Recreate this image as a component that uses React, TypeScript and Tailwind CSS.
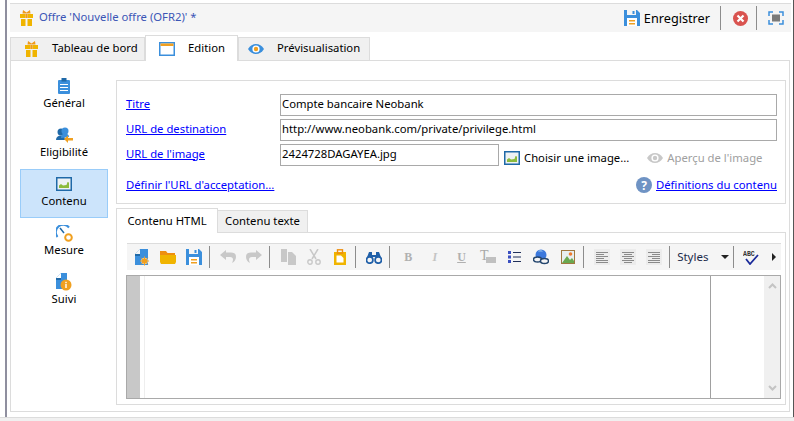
import type { ReactNode } from "react";

const Gift = () => (
  <svg width="13" height="16" viewBox="0 0 13 16">
    <path d="M3 0l3.500 2.500L10 0l.5 3.500h-8z" fill="#ee9a1c" />
    <rect x="0" y="4" width="5.500" height="4" fill="#f0b400" />
    <rect x="7.500" y="4" width="5.500" height="4" fill="#f0b400" />
    <rect x="5.500" y="4" width="2" height="4" fill="#ee9a1c" />
    <rect x="1" y="9" width="4.500" height="7" fill="#f0b400" />
    <rect x="7.500" y="9" width="4.500" height="7" fill="#f0b400" />
  </svg>
);

const Floppy = ({ size = 16 }: { size?: number }) => (
  <svg width={size} height={size} viewBox="0 0 16 16">
    <path d="M0 0h3v5h9V0h1l3 3v13H0z" fill="#3b8fdc" />
    <rect x="8.500" y="1" width="2" height="3" fill="#3b8fdc" />
    <rect x="3" y="8" width="10" height="8" fill="#fff" />
    <rect x="5" y="10" width="6" height="1.500" fill="#f0a020" />
    <rect x="5" y="13" width="6" height="1.500" fill="#f0a020" />
  </svg>
);

const ImageIcon = () => (
  <svg width="16" height="14" viewBox="0 0 16 14">
    <rect x="0.750" y="0.750" width="14.500" height="12.500" fill="#eef2f4" stroke="#1f69a8" strokeWidth="1.500" />
    <path d="M3 11V8.500l2-1.500 2 1.500L10.500 8l1-3 1.500.5V11z" fill="#8cbb3c" />
  </svg>
);

const Eye = ({ color, pupil }: { color: string; pupil: string }) => (
  <svg width="16" height="12" viewBox="0 0 16 12">
    <path d="M0 6c2-3.500 5-5 8-5s6 1.500 8 5c-2 3.500-5 5-8 5S2 9.500 0 6z" fill={color} />
    <circle cx="8" cy="6" r="3.600" fill="#fff" />
    <circle cx="8" cy="6" r="2.200" fill={pupil} />
  </svg>
);

const NavClipboard = () => (
  <svg width="12" height="16" viewBox="0 0 12 16">
    <rect y="2" width="12" height="14" rx="1" fill="#3b8fdc" />
    <rect x="3.500" y="0" width="5" height="3.500" fill="#1f69a8" />
    <rect x="2" y="6" width="8" height="1" fill="#fff" />
    <rect x="2" y="9" width="8" height="1" fill="#fff" />
    <rect x="2" y="12" width="8" height="1" fill="#fff" />
  </svg>
);

const NavUsers = () => (
  <svg width="17" height="16" viewBox="0 0 17 16">
    <circle cx="5" cy="5" r="3.500" fill="#1f69a8" />
    <path d="M0 13c0-3 2-4.500 5-4.500S9 10 9 13z" fill="#1f69a8" />
    <circle cx="9" cy="4" r="3.500" fill="#3b8fdc" />
    <path d="M5 11c0-3 1.500-4.500 4-4.500s4 1.500 4 3.500z" fill="#3b8fdc" />
    <path d="M8 12l4-3.500V11h5v2.500h-5V16z" fill="#f0a020" />
  </svg>
);

const NavGauge = () => (
  <svg width="17" height="17" viewBox="0 0 17 17">
    <path d="M1.500 12A7 7 0 0 1 13 2.500" fill="none" stroke="#3b8fdc" strokeWidth="2" />
    <path d="M4 3l4 5" stroke="#1f69a8" strokeWidth="1.500" />
    <circle cx="12.500" cy="12.500" r="3.300" fill="#fff" stroke="#f0a020" strokeWidth="2" />
  </svg>
);

const NavFollow = () => (
  <svg width="16" height="18" viewBox="0 0 16 18">
    <path d="M0 5l5-5h6v16H0z" fill="#3b8fdc" />
    <path d="M0 5h5V0z" fill="#fff" />
    <rect x="0" y="5" width="5" height="2" fill="#1f69a8" />
    <circle cx="10" cy="12" r="5.500" fill="#f0a020" />
    <rect x="9.300" y="11" width="1.400" height="4" fill="#fff" />
    <rect x="9.300" y="8.800" width="1.400" height="1.400" fill="#fff" />
  </svg>
);

const Sep = () => <div className="w-px h-[22px] bg-[#8c8c8c] ml-[2px] mr-[5px] shrink-0" />;

const Btn = ({ children, wide }: { children: ReactNode; wide?: boolean }) => (
  <div className={`${wide ? "w-[26.6px]" : "w-[26px]"} h-[22px] flex items-center justify-center shrink-0`}>
    {children}
  </div>
);

const AlignIcon = ({ lines }: { lines: [number, number][] }) => (
  <div className="w-4 h-4 bg-[#ececec] flex items-center justify-center">
    <svg width="12" height="11" viewBox="0 0 12 11">
      {lines.map(([x, w], i) => (
        <rect key={i} x={x} y={i * 2} width={w} height="1" fill="#8a8a8a" />
      ))}
    </svg>
  </div>
);

const navItems = [
  { label: "Général", icon: <NavClipboard /> },
  { label: "Eligibilité", icon: <NavUsers /> },
  { label: "Contenu", icon: <ImageIcon />, active: true },
  { label: "Mesure", icon: <NavGauge /> },
  { label: "Suivi", icon: <NavFollow /> },
];

const fields = [
  { label: "Titre", value: "Compte bancaire Neobank" },
  { label: "URL de destination", value: "http://www.neobank.com/private/privilege.html" },
];

export default function App() {
  return (
    <div
      className="w-[794px] h-[421px] bg-white overflow-hidden flex flex-col text-[11.3px] text-black"
      style={{ fontFamily: '"Noto Sans", sans-serif' }}
    >
      <div className="h-[417px] flex pl-[5px] pr-px border-r border-[#555]">
        <div className="flex-1 border-l-2 border-[#8f8f9f] pl-[3px] pt-[3px] flex flex-col">
          {/* title bar */}
          <div className="h-[29px] mr-[1px] border-t border-[#dcdcdc] bg-[#f5f5f5] flex items-center pl-[10px] pr-[7px] shrink-0">
            <Gift />
            <span className="ml-[6px] pb-[2px] text-[#3b55b5]">Offre 'Nouvelle offre (OFR2)' *</span>
            <div className="ml-auto flex items-center">
              <Floppy />
              <span className="ml-[4px] text-[12.7px] leading-none">Enregistrer</span>
              <div className="w-px h-6 bg-[#8c8c8c] ml-[10px] mr-[12px]" />
              <svg width="15" height="15" viewBox="0 0 15 15">
                <circle cx="7.500" cy="7.500" r="7.500" fill="#d9534f" />
                <path d="M4.500 4.500l6 6m0-6l-6 6" stroke="#fff" strokeWidth="2.200" />
              </svg>
              <div className="w-px h-6 bg-[#8c8c8c] ml-[8px] mr-[11px]" />
              <svg width="16" height="14" viewBox="0 0 16 14">
                <path d="M1 5V1h4M11 1h4v4M15 9v4h-4M5 13H1V9" fill="none" stroke="#3b8fdc" strokeWidth="1.500" />
                <rect x="4" y="3.500" width="8" height="7" fill="#7a7a7a" />
              </svg>
            </div>
          </div>

          {/* main tabs */}
          <div className="h-[26px] flex items-end shrink-0 relative z-10 -mb-px mt-[3px]">
            <div className="h-[24px] w-[135px] bg-[#f0f0f0] border border-[#dcdcdc] flex items-center pl-[14px]">
              <Gift />
              <span className="ml-[14px] pb-[2px]">Tableau de bord</span>
            </div>
            <div className="h-[26px] w-[93px] bg-white border border-[#dcdcdc] border-b-0 flex items-center pl-[13px]">
              <svg width="16" height="14" viewBox="0 0 16 14">
                <rect x="0.750" y="0.750" width="14.500" height="12.500" fill="#fff" stroke="#3b8fdc" strokeWidth="1.500" />
                <rect x="1.500" y="1.500" width="13" height="2.500" fill="#f0a020" />
              </svg>
              <span className="ml-[13px]">Edition</span>
            </div>
            <div className="h-[24px] w-[132px] bg-[#f0f0f0] border border-[#dcdcdc] flex items-center pl-[9px]">
              <Eye color="#3b8fdc" pupil="#f0a020" />
              <span className="ml-[13px] pb-[2px]">Prévisualisation</span>
            </div>
          </div>

          {/* body */}
          <div className="flex-1 mr-[2px] mb-[5px] border border-[#dcdcdc] flex pl-[9px] pt-[10px] pr-[3px] pb-[6px] min-h-0">
            <div className="w-[88px] mr-[8px] shrink-0">
              {navItems.map((item) => (
                <div
                  key={item.label}
                  className={`h-[49px] flex flex-col items-center border ${
                    item.active ? "bg-[#cce4fb] border-[#99ccf9]" : "border-transparent"
                  }`}
                >
                  <div className="h-[18px] mt-[5px] flex items-center justify-center">{item.icon}</div>
                  <span className="leading-[16px]">{item.label}</span>
                </div>
              ))}
            </div>

            <div className="flex-1 flex flex-col mt-[9px] min-w-0">
              {/* form */}
              <div className="h-[124px] border border-[#dcdcdc] pl-[9px] pr-[8px] pt-[13px] shrink-0 flex flex-col">
                <div className="flex flex-col gap-[3px]">
                  {fields.map((f) => (
                    <div key={f.label} className="flex items-center h-[22px]">
                      <a className="w-[154px] pb-[2px] text-[#0000ff] underline shrink-0">{f.label}</a>
                      <div className="flex-1 h-[22px] border border-[#a9a9a9] pl-[1px] pb-[1px] flex items-center">{f.value}</div>
                    </div>
                  ))}
                  <div className="flex items-center h-[22px]">
                    <a className="w-[154px] pb-[2px] text-[#0000ff] underline shrink-0">URL de l'image</a>
                    <div className="w-[219px] h-[22px] border border-[#a9a9a9] pl-[1px] pb-[1px] flex items-center">2424728DAGAYEA.jpg</div>
                    <div className="ml-[5px] flex items-center translate-y-[3px]">
                      <ImageIcon />
                      <span className="ml-[4px]">Choisir une image...</span>
                    </div>
                    <div className="ml-[18px] flex items-center text-[#a0a0a0] translate-y-[3px]">
                      <Eye color="#c8c8c8" pupil="#c8c8c8" />
                      <span className="ml-[4px]">Aperçu de l'image</span>
                    </div>
                  </div>
                </div>
                <div className="flex items-center justify-between mt-[9px] h-[20px]">
                  <a className="text-[#0000ff] underline">Définir l'URL d'acceptation...</a>
                  <div className="flex items-center">
                    <svg width="16" height="16" viewBox="0 0 16 16">
                      <circle cx="8" cy="8" r="8" fill="#6f93c4" />
                      <text x="8" y="12.500" textAnchor="middle" fontSize="12" fontWeight="700" fill="#fff">?</text>
                    </svg>
                    <a className="ml-[4px] text-[#0000ff] underline">Définitions du contenu</a>
                  </div>
                </div>
              </div>

              {/* content tabs */}
              <div className="flex items-end h-[25px] mt-[4px] -mb-px relative z-10 shrink-0">
                <div className="h-[25px] w-[102px] bg-white border border-[#dcdcdc] border-b-0 flex items-center justify-center">Contenu HTML</div>
                <div className="h-[23px] w-[90px] bg-[#f0f0f0] border border-[#dcdcdc] border-l-0 flex items-center justify-center">Contenu texte</div>
              </div>

              {/* editor panel */}
              <div className="flex-1 border border-[#dcdcdc] pl-[9px] pr-[4px] pt-[10px] pb-[5px] flex flex-col min-h-0">
                <div className="h-[27px] border-t border-[#dcdcdc] bg-[#f5f5f5] flex items-center pl-[2px] ml-[1px] shrink-0">
                  <Btn>
                    <svg width="14" height="17" viewBox="0 0 14 17">
                      <path d="M0 5l5-5h8v16H0z" fill="#3b8fdc" />
                      <path d="M0 5h5V0z" fill="#f5f5f5" />
                      <rect y="5" width="5" height="2" fill="#1f69a8" />
                      <circle cx="9.500" cy="12" r="3.200" fill="#f5f5f5" />
                      <circle cx="9.500" cy="12" r="2.800" fill="#f0a020" />
                      <path d="M9.500 7.500v9M5 12h9M6.300 8.800l6.400 6.400M12.700 8.800l-6.400 6.400" stroke="#f0a020" strokeWidth="1" />
                    </svg>
                  </Btn>
                  <Btn>
                    <svg width="16" height="13" viewBox="0 0 16 13">
                      <path d="M0 0h6l1.500 2H15v2H0z" fill="#ee8f10" />
                      <path d="M0 4h16v7l-1 2H1l-1-2z" fill="#f0b400" />
                    </svg>
                  </Btn>
                  <Btn><Floppy /></Btn>
                  <Sep />
                  <Btn>
                    <svg width="16" height="14" viewBox="0 0 16 14">
                      <path d="M6 0L0 5l6 5V7h4c2 0 3 1 3 2.500 0 1.500-1 3.500-1 3.500 2.500-1 4-3.500 4-6C16 3.500 14 2.500 11 2.500H6z" fill="#c8c8c8" />
                    </svg>
                  </Btn>
                  <Btn>
                    <svg width="16" height="14" viewBox="0 0 16 14">
                      <path d="M10 0l6 5-6 5V7H6c-2 0-3 1-3 2.500 0 1.500 1 3.500 1 3.500-2.500-1-4-3.500-4-6C0 3.500 2 2.500 5 2.500h5z" fill="#c8c8c8" />
                    </svg>
                  </Btn>
                  <Sep />
                  <Btn>
                    <svg width="15" height="16" viewBox="0 0 15 16">
                      <rect width="6" height="13" fill="#c8c8c8" />
                      <path d="M7 3h4l4 4v9H7z" fill="#c8c8c8" />
                    </svg>
                  </Btn>
                  <Btn>
                    <svg width="14" height="16" viewBox="0 0 14 16">
                      <path d="M3 0l6 10M11 0L5 10" stroke="#c8c8c8" strokeWidth="1.500" />
                      <circle cx="3" cy="13" r="2.200" fill="none" stroke="#c8c8c8" strokeWidth="1.400" />
                      <circle cx="11" cy="13" r="2.200" fill="none" stroke="#c8c8c8" strokeWidth="1.400" />
                    </svg>
                  </Btn>
                  <Btn>
                    <svg width="12" height="16" viewBox="0 0 12 16">
                      <rect y="3" width="12" height="13" fill="#f0b400" />
                      <rect x="3.500" y="0.800" width="5" height="3.500" fill="none" stroke="#ee8f10" strokeWidth="1.400" />
                      <path d="M2.500 6.500h4.500L9.500 9v4.500h-7z" fill="#fff" />
                    </svg>
                  </Btn>
                  <Sep />
                  <Btn>
                    <svg width="16" height="13" viewBox="0 0 16 13">
                      <path d="M3 1h3v3h4V1h3l3 8H10V6H6v3H0z" fill="#1f5fa8" />
                      <circle cx="3.700" cy="9" r="3.200" fill="#f5f5f5" stroke="#1f5fa8" strokeWidth="1.700" />
                      <circle cx="12.300" cy="9" r="3.200" fill="#f5f5f5" stroke="#1f5fa8" strokeWidth="1.700" />
                    </svg>
                  </Btn>
                  <Sep />
                  <Btn wide><span className="text-[12px] font-bold text-[#b0b0b0] leading-none" style={{ fontFamily: '"Liberation Serif", serif' }}>B</span></Btn>
                  <Btn wide><span className="text-[12px] italic font-bold text-[#c4c4c4] leading-none" style={{ fontFamily: '"Liberation Serif", serif' }}>I</span></Btn>
                  <Btn wide><span className="text-[12px] font-bold text-[#b0b0b0] underline leading-none" style={{ fontFamily: '"Liberation Serif", serif' }}>U</span></Btn>
                  <Btn wide>
                    <div className="relative w-4 h-3">
                      <span className="absolute -top-[2px] left-0 text-[14px] text-[#a8a8a8] leading-none" style={{ fontFamily: '"Liberation Serif", serif' }}>T</span>
                      <div className="absolute bottom-0 right-0 w-[10px] h-[6px] bg-[#c0c0c0]" />
                    </div>
                  </Btn>
                  <Btn wide>
                    <svg width="13" height="12" viewBox="0 0 13 12">
                      {[1.500, 6, 10.500].map((y) => (
                        <g key={y}>
                          <rect x="0" y={y - 1.500} width="3" height="3" fill="#3a4fc0" />
                          <rect x="5" y={y - 0.500} width="8" height="1" fill="#20305a" />
                        </g>
                      ))}
                    </svg>
                  </Btn>
                  <Btn wide>
                    <svg width="16" height="16" viewBox="0 0 16 16">
                      <circle cx="8" cy="6" r="5.500" fill="#3b78dc" />
                      <path d="M5 2.500a3 3 0 0 1 5 0z" fill="#9cc8f0" />
                      <ellipse cx="4.500" cy="10.500" rx="4" ry="2.500" fill="#f5f5f5" stroke="#24466e" strokeWidth="1.500" />
                      <ellipse cx="11.500" cy="12" rx="4" ry="2.500" fill="#f5f5f5" stroke="#24466e" strokeWidth="1.500" />
                    </svg>
                  </Btn>
                  <Btn wide>
                    <svg width="14" height="14" viewBox="0 0 14 14">
                      <rect x="0.500" y="0.500" width="13" height="13" fill="#e8eef0" stroke="#a07840" />
                      <path d="M1 13L6 6l3 4 2-2 2 3v2z" fill="#6aa84f" />
                      <circle cx="9.500" cy="4" r="1.800" fill="#ee7b30" />
                    </svg>
                  </Btn>
                  <Sep />
                  <Btn><AlignIcon lines={[[0, 12], [0, 8], [0, 12], [0, 8], [0, 12], [0, 12]]} /></Btn>
                  <Btn><AlignIcon lines={[[0, 12], [2, 8], [0, 12], [2, 8], [0, 12], [2, 8]]} /></Btn>
                  <Btn><AlignIcon lines={[[0, 12], [4, 8], [0, 12], [4, 8], [0, 12], [0, 12]]} /></Btn>
                  <Sep />
                  <div className="w-[57px] flex items-center justify-between pl-[3px] pr-[2px] -ml-[1px] mr-[2px] shrink-0">
                    <span className="text-[11.5px] text-[#1b2a4a]">Styles</span>
                    <span className="w-0 h-0 border-x-[4px] border-x-transparent border-t-[4px] border-t-[#222]" />
                  </div>
                  <div className="w-px h-[22px] bg-[#8c8c8c] mr-[4px] shrink-0" />
                  <Btn>
                    <svg width="16" height="15" viewBox="0 0 16 15">
                      <text x="0" y="5.500" fontSize="6.500" fontWeight="700" fill="#333" fontFamily='"Liberation Mono", monospace'>ABC</text>
                      <path d="M3 9l4 5 8-9" fill="none" stroke="#1a2a9a" strokeWidth="1.800" />
                    </svg>
                  </Btn>
                  <span className="ml-[8px] w-0 h-0 border-y-[4px] border-y-transparent border-l-[4px] border-l-[#222]" />
                </div>

                <div className="mt-[5px] flex-1 border border-[#a9a9a9] flex min-h-0">
                  <div className="w-[13px] bg-[#c8c8c8] shrink-0" />
                  <div className="w-[5px] border-r border-[#eeeeee] shrink-0" />
                  <div className="flex-1 border-r border-[#a0a0a0]" />
                  <div className="w-[53px] shrink-0" />
                  <div className="w-[16px] bg-[#f0f0f0] shrink-0 flex flex-col items-center justify-between py-[7px]">
                    <svg width="9" height="6" viewBox="0 0 9 6">
                      <path d="M1 5l3.500-3.500L8 5" fill="none" stroke="#c4c4c4" strokeWidth="2" />
                    </svg>
                    <svg width="9" height="6" viewBox="0 0 9 6">
                      <path d="M1 1l3.500 3.500L8 1" fill="none" stroke="#c4c4c4" strokeWidth="2" />
                    </svg>
                  </div>
                </div>
              </div>
            </div>
          </div>
        </div>
      </div>
      <div className="flex-1 bg-[#f0f0f0] border-t border-[#dcdcdc]" />
    </div>
  );
}
